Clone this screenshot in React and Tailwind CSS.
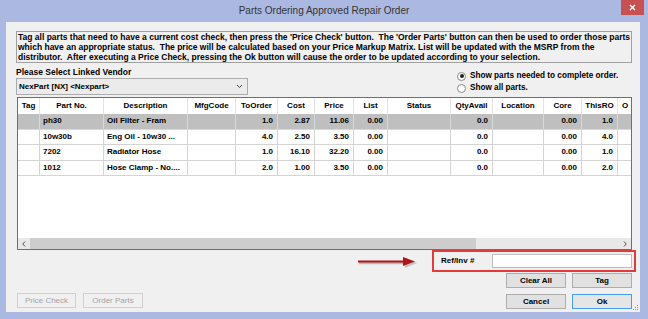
import React from 'react';

const cols = [
  { key: 'tag', label: 'Tag', w: 22 },
  { key: 'part', label: 'Part No.', w: 64, align: 'left' },
  { key: 'desc', label: 'Description', w: 84, align: 'left' },
  { key: 'mfg', label: 'MfgCode', w: 48 },
  { key: 'toOrder', label: 'ToOrder', w: 42, align: 'right' },
  { key: 'cost', label: 'Cost', w: 37, align: 'right' },
  { key: 'price', label: 'Price', w: 39, align: 'right' },
  { key: 'list', label: 'List', w: 34, align: 'right' },
  { key: 'status', label: 'Status', w: 63 },
  { key: 'qty', label: 'QtyAvail', w: 42, align: 'right' },
  { key: 'loc', label: 'Location', w: 51 },
  { key: 'core', label: 'Core', w: 38, align: 'right' },
  { key: 'thisRO', label: 'ThisRO', w: 36, align: 'right' },
  { key: 'o', label: 'O', w: 50, align: 'left' },
];

const rows = [
  { part: 'ph30', desc: 'Oil Filter - Fram', toOrder: '1.0', cost: '2.87', price: '11.06', list: '0.00', qty: '0.0', core: '0.00', thisRO: '1.0', selected: true },
  { part: '10w30b', desc: 'Eng Oil - 10w30 ...', toOrder: '4.0', cost: '2.50', price: '3.50', list: '0.00', qty: '0.0', core: '0.00', thisRO: '4.0' },
  { part: '7202', desc: 'Radiator Hose', toOrder: '1.0', cost: '16.10', price: '32.20', list: '0.00', qty: '0.0', core: '0.00', thisRO: '1.0' },
  { part: '1012', desc: 'Hose Clamp - No....', toOrder: '2.0', cost: '1.00', price: '3.50', list: '0.00', qty: '0.0', core: '0.00', thisRO: '2.0' },
];

function Radio({ checked, label }) {
  return (
    <div className="h-[12px] flex items-center gap-[4px]">
      <span className="w-[9px] h-[9px] rounded-full border border-[#8a8a8a] bg-white flex items-center justify-center">
        {checked && <span className="w-[4px] h-[4px] rounded-full bg-[#222]" />}
      </span>
      <span className="font-bold text-[8.2px] leading-none text-black">{label}</span>
    </div>
  );
}

function Btn({ children, disabled, focused, w }) {
  const base = 'h-[15px] flex items-center justify-center text-[8px] leading-none border';
  let cls;
  if (disabled) cls = 'bg-[#f0f0f0] border-[#cfcfcf] text-[#a3a3a3]';
  else if (focused) cls = 'bg-[#e5e5e5] border-[#4a9ee8] text-black font-bold';
  else cls = 'bg-[#e1e1e1] border-[#adadad] text-black font-bold';
  return <div className={`${base} ${cls} ${w}`}>{children}</div>;
}

function App() {
  return (
    <div className="w-[648px] h-[319px] bg-[#abb9e2] flex flex-col overflow-hidden font-['Liberation_Sans',Arial,sans-serif]">
      <div className="h-[22px] relative flex items-center justify-center">
        <span className="text-[10px] text-[#333] leading-none">Parts Ordering Approved Repair Order</span>
        <div className="absolute right-[4px] top-0 w-[23px] h-[15px] bg-[#c75050] flex items-center justify-center">
          <svg width="7" height="7" viewBox="0 0 7 7">
            <path d="M1 1L6 6M6 1L1 6" stroke="white" strokeWidth="1.4" />
          </svg>
        </div>
      </div>

      <div className="ml-[6px] mr-[8px] h-[290px] bg-[#f0f0f0] flex flex-col pl-[10px] pr-[8px] pt-[9px] relative">
        <div className="h-[32px] border border-[#a0a0a0] bg-[#f0f0f0] text-[8.5px] leading-[10px] text-black pl-[1px] font-bold whitespace-nowrap overflow-hidden">
          <div>Tag all parts that need to have a current cost check, then press the 'Price Check' button.&nbsp; The 'Order Parts' button can then be used to order those parts</div>
          <div>which have an appropriate status.&nbsp; The price will be calculated based on your Price Markup Matrix. List will be updated with the MSRP from the</div>
          <div>distributor.&nbsp; After executing a Price Check, pressing the Ok button will cause the order to be updated according to your selection.</div>
        </div>

        <div className="flex mt-[4px]">
          <div className="flex flex-col">
            <div className="h-[10px] text-[8.5px] leading-[10px] font-bold text-black">Please Select Linked Vendor</div>
            <div className="mt-[1px] w-[232px] h-[17px] border border-[#acacac] bg-[#ebebeb] flex items-center justify-between pl-[2px] pr-[4px]">
              <span className="text-[8px] font-bold leading-none">NexPart [NX] &lt;Nexpart&gt;</span>
              <svg width="7" height="5" viewBox="0 0 7 5">
                <path d="M1 1L3.5 3.5L6 1" stroke="#444" strokeWidth="1" fill="none" />
              </svg>
            </div>
          </div>
          <div className="ml-[209px] pt-[3px] flex flex-col">
            <Radio checked label="Show parts needed to complete order." />
            <Radio label="Show all parts." />
          </div>
        </div>

        <div className="mt-[2px] ml-[1px] h-[153px] border border-[#6e6e6e] bg-white flex flex-col overflow-hidden">
          <div className="h-[16px] flex shrink-0">
            {cols.map((c) => (
              <div
                key={c.key}
                style={{ width: c.w }}
                className={`shrink-0 border-r border-[#e3e3e3] flex items-center text-[8px] font-bold leading-none whitespace-nowrap overflow-hidden ${
                  c.key === 'o' ? 'justify-start pl-[4px]' : 'justify-center'
                }`}
              >
                {c.label}
              </div>
            ))}
          </div>
          {rows.map((r, i) => (
            <div key={i} className={`h-[15.5px] flex shrink-0 ${r.selected ? 'bg-[#bfbfbf]' : 'bg-white'}`}>
              {cols.map((c) => (
                <div
                  key={c.key}
                  style={{ width: c.w }}
                  className={`shrink-0 border-r border-b ${r.selected ? 'border-[#d8d8d8]' : 'border-[#d4d4d4]'} flex items-center text-[8px] font-bold leading-none whitespace-nowrap overflow-hidden ${
                    c.align === 'right' ? 'justify-end pr-[4px]' : 'justify-start pl-[3px]'
                  }`}
                >
                  {r[c.key] || ''}
                </div>
              ))}
            </div>
          ))}
          <div className="flex-1" />
          <div className="h-[11px] shrink-0 flex bg-[#e8e8e8]">
            <div className="w-[12px] flex items-center justify-center">
              <svg width="4" height="6" viewBox="0 0 4 6">
                <path d="M3 0.5L0.8 3L3 5.5" stroke="#555" strokeWidth="1" fill="none" />
              </svg>
            </div>
            <div className="w-[446px] bg-[#cdcdcd]" />
            <div className="flex-1" />
            <div className="w-[12px] flex items-center justify-center">
              <svg width="4" height="6" viewBox="0 0 4 6">
                <path d="M1 0.5L3.2 3L1 5.5" stroke="#555" strokeWidth="1" fill="none" />
              </svg>
            </div>
          </div>
        </div>

        <div className="flex-1 flex justify-between items-end pb-[3px]">
          <div className="flex gap-[7px] ml-[1px] mb-[1px]">
            <Btn disabled w="w-[59px]">Price Check</Btn>
            <Btn disabled w="w-[60px]">Order Parts</Btn>
          </div>
          <div className="flex flex-col items-end h-full">
            <div className="flex items-center -mr-[4px]">
              <svg width="60" height="12" viewBox="0 0 60 12" className="mr-[14px] mt-[2px]">
                <path d="M1 7H48" stroke="#8c8c8c" strokeWidth="2.4" opacity="0.55" />
                <path d="M47 2L59 7L47 12Z" fill="#8c8c8c" opacity="0.45" />
                <path d="M0 5.5H47" stroke="#b3141a" strokeWidth="2.2" />
                <path d="M45 1L57 5.5L45 10Z" fill="#b3141a" />
              </svg>
              <div className="w-[204px] h-[22px] border-2 border-[#e23b3b] flex items-center pl-[7px] pr-[2px]">
                <span className="text-[8px] font-bold leading-none w-[51px]">Ref/Inv #</span>
                <div className="flex-1 h-[14px] bg-white border border-[#bdbdbd]" />
              </div>
            </div>
            <div className="mt-[1px] grid grid-cols-2 gap-x-[6px] gap-y-[6px]">
              <Btn w="w-[60px]">Clear All</Btn>
              <Btn w="w-[60px]">Tag</Btn>
              <Btn w="w-[60px]">Cancel</Btn>
              <Btn focused w="w-[60px]">Ok</Btn>
            </div>
          </div>
        </div>

        <svg width="6" height="6" viewBox="0 0 6 6" className="absolute right-[1px] bottom-[1px]">
          <rect x="4" y="0" width="1" height="1" fill="#9a9a9a" />
          <rect x="2" y="2" width="1" height="1" fill="#9a9a9a" />
          <rect x="4" y="2" width="1" height="1" fill="#9a9a9a" />
          <rect x="0" y="4" width="1" height="1" fill="#9a9a9a" />
          <rect x="2" y="4" width="1" height="1" fill="#9a9a9a" />
          <rect x="4" y="4" width="1" height="1" fill="#9a9a9a" />
        </svg>
      </div>
    </div>
  );
}

export default App;
